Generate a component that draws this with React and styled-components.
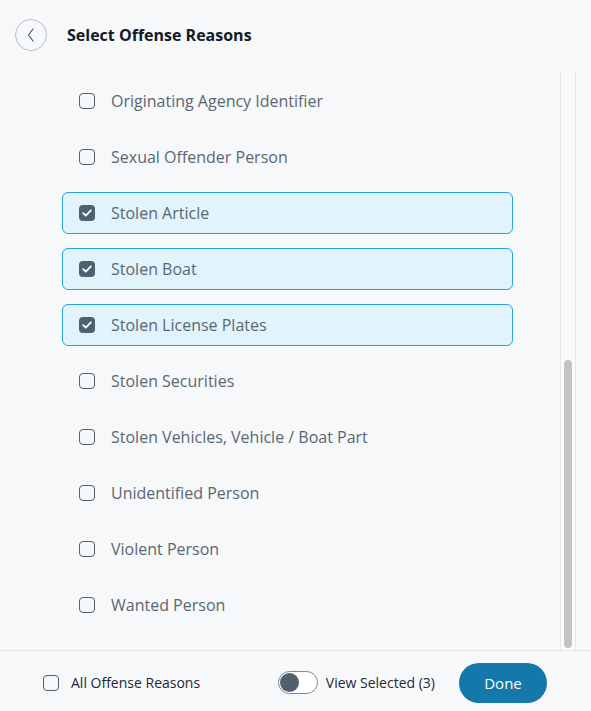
import React, { useLayoutEffect, useRef, useState } from "react";
import styled, { createGlobalStyle } from "styled-components";

const GlobalStyle = createGlobalStyle`
  html, body {
    margin: 0;
    padding: 0;
    background: #f7f8fa;
    font-family: "Open Sans", "Noto Sans", sans-serif;
  }
  * { box-sizing: border-box; }
`;

const reasons = [
  "Article", "Boat", "Foreign Fugitive", "Gang", "Gun", "Identity Theft",
  "Immigration Violator", "License Plate", "Missing Person", "NICS Denied Transaction",
  "Originating Agency Identifier", "Sexual Offender Person", "Stolen Article",
  "Stolen Boat", "Stolen License Plates", "Stolen Securities",
  "Stolen Vehicles, Vehicle / Boat Part", "Unidentified Person", "Violent Person",
  "Wanted Person",
];

const Page = styled.div`
  height: 100vh;
  display: flex;
  flex-direction: column;
  background: #f7f8fa;
`;

const Header = styled.header`
  height: 70px;
  flex: none;
  display: flex;
  align-items: center;
  padding-left: 15px;
  gap: 20px;
`;

const BackButton = styled.button`
  width: 32px;
  height: 32px;
  border-radius: 50%;
  border: 1px solid #b9bfc6;
  background: transparent;
  display: flex;
  align-items: center;
  justify-content: center;
  padding: 0;
  color: #4b5864;
  svg { display: block; }
`;

const Title = styled.h1`
  margin: 0;
  font-size: 16px;
  font-weight: 700;
  color: #121b25;
`;

const Body = styled.div`
  flex: 1;
  min-height: 0;
  display: flex;
  margin: 1px 15px 0 0;
`;

const ListArea = styled.div`
  flex: 1;
  overflow-y: scroll;
  scrollbar-width: none;
  padding: 24px 0 24px 62px;
  &::-webkit-scrollbar { display: none; }
`;

const ScrollTrack = styled.div`
  position: relative;
  width: 16px;
  flex: none;
  background: #fafafa;
  border-left: 1px solid #e6e6e6;
  border-right: 1px solid #e6e6e6;
`;

const Thumb = styled.div`
  position: absolute;
  left: 3px;
  width: 8px;
  border-radius: 4px;
  background: #c2c2c2;
`;

const List = styled.div`
  width: 451px;
  display: flex;
  flex-direction: column;
  gap: 14px;
`;

const Row = styled.label`
  height: 42px;
  display: flex;
  align-items: center;
  gap: 16px;
  padding-left: 16px;
  border-radius: 6px;
  border: 1px solid ${p => (p.$checked ? "#2aa3d8" : "transparent")};
  background: ${p => (p.$checked ? "#e1f4fc" : "transparent")};
  font-size: 16px;
  color: #5a6773;
  cursor: pointer;
`;

const Box = styled.span`
  width: 16px;
  height: 16px;
  flex: none;
  border-radius: 4px;
  border: ${p => (p.$checked ? "none" : "1.5px solid #4f6170")};
  background: ${p => (p.$checked ? "#4f6170" : "transparent")};
  display: flex;
  align-items: center;
  justify-content: center;
`;

const Footer = styled.footer`
  height: 61px;
  flex: none;
  border-top: 1px solid #e4e6e9;
  display: flex;
  align-items: center;
  padding: 3px 44px 0 43px;
`;

const AllLabel = styled.label`
  display: flex;
  align-items: center;
  gap: 12px;
  font-size: 14px;
  color: #1e2833;
  flex: 1;
`;

const ToggleWrap = styled.label`
  display: flex;
  align-items: center;
  gap: 8px;
  font-size: 14px;
  color: #1e2833;
  margin-right: 24px;
`;

const Track = styled.span`
  width: 40px;
  height: 23px;
  border-radius: 12px;
  border: 1px solid #7d8893;
  background: #fff;
  padding: 1px;
  display: flex;
  align-items: center;
`;

const Knob = styled.span`
  width: 19px;
  height: 19px;
  border-radius: 50%;
  background: #4f6170;
`;

const DoneButton = styled.button`
  width: 88px;
  height: 40px;
  border: none;
  border-radius: 20px;
  background: #1479aa;
  color: #fff;
  font-family: inherit;
  font-size: 15px;
  font-weight: 500;
`;

const Check = ({ checked }) => (
  <Box $checked={checked}>
    {checked && (
      <svg width="10" height="8" viewBox="0 0 10 8">
        <path d="M1.2 4.2 L3.8 6.6 L8.8 1.4" fill="none" stroke="#fff" strokeWidth="1.8" strokeLinecap="round" strokeLinejoin="round" />
      </svg>
    )}
  </Box>
);

export default function App() {
  const [selected, setSelected] = useState(["Stolen Article", "Stolen Boat", "Stolen License Plates"]);
  const [thumb, setThumb] = useState({ top: 0, height: 0 });
  const listRef = useRef(null);

  const measure = () => {
    const el = listRef.current;
    if (!el) return;
    const track = el.clientHeight - 4;
    const height = Math.max(20, (el.clientHeight / el.scrollHeight) * track);
    const max = el.scrollHeight - el.clientHeight;
    const top = 2 + (max > 0 ? (el.scrollTop / max) * (track - height) : 0);
    setThumb({ top, height });
  };

  useLayoutEffect(() => {
    const el = listRef.current;
    if (el) el.scrollTop = el.scrollHeight;
    measure();
  }, []);

  const toggle = name =>
    setSelected(s => (s.includes(name) ? s.filter(n => n !== name) : [...s, name]));

  return (
    <Page>
      <GlobalStyle />
      <Header>
        <BackButton type="button" aria-label="Back">
          <svg width="10" height="16" viewBox="0 0 10 16">
            <path d="M7 2 L2.5 8 L7 14" fill="none" stroke="currentColor" strokeWidth="1.2" strokeLinecap="round" strokeLinejoin="round" />
          </svg>
        </BackButton>
        <Title>Select Offense Reasons</Title>
      </Header>

      <Body>
        <ListArea ref={listRef} onScroll={measure}>
          <List>
            {reasons.map(name => {
              const checked = selected.includes(name);
              return (
                <Row key={name} $checked={checked} onClick={() => toggle(name)}>
                  <Check checked={checked} />
                  {name}
                </Row>
              );
            })}
          </List>
        </ListArea>
        <ScrollTrack>
          <Thumb style={{ top: thumb.top, height: thumb.height }} />
        </ScrollTrack>
      </Body>

      <Footer>
        <AllLabel>
          <Check checked={false} />
          All Offense Reasons
        </AllLabel>
        <ToggleWrap>
          <Track><Knob /></Track>
          View Selected ({selected.length})
        </ToggleWrap>
        <DoneButton type="button">Done</DoneButton>
      </Footer>
    </Page>
  );
}
